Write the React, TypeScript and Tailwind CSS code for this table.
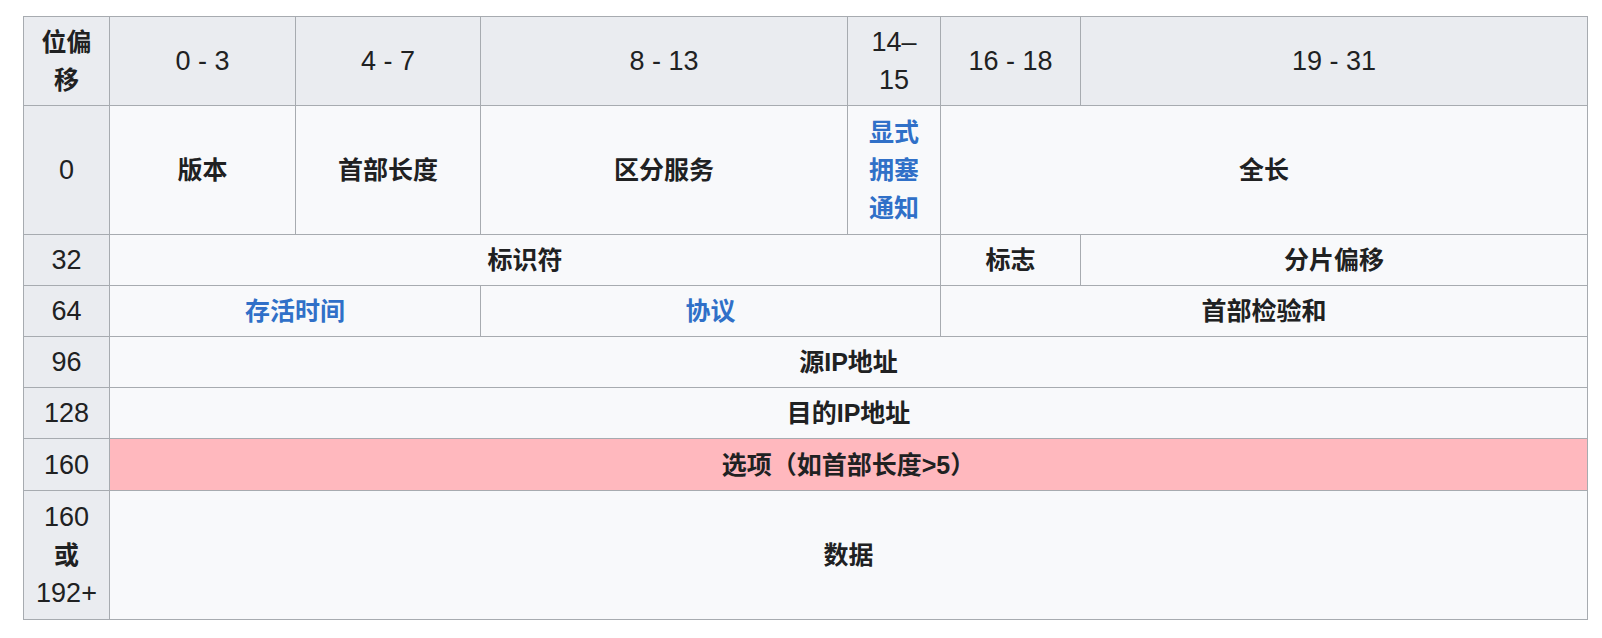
import React from 'react';

const num = "font-['Liberation_Sans','Noto_Sans_CJK_SC',sans-serif]";
const cjk = "font-['Liberation_Sans','Noto_Sans_CJK_SC',sans-serif]";

const th = `border border-[#a7abb0] bg-[#eaecf0] text-center align-middle text-[#202122] leading-[38px] p-0`;
const cell = `border border-[#a7abb0] bg-[#f8f9fb] text-center align-middle leading-[38px] p-0 text-[25px] font-bold ${cjk}`;
const td = `${cell} text-[#202122]`;
const link = `${cell} text-[#3070c8]`;
const rowHead = `${th} text-[27px] font-normal ${num}`;

const App: React.FC = () => {
  return (
    <div className="min-h-screen bg-white pl-[23px] pt-[16px]">
      <table className="table-fixed border-collapse w-[1564px]">
        <colgroup>
          <col className="w-[86px]" />
          <col className="w-[186px]" />
          <col className="w-[185px]" />
          <col className="w-[367px]" />
          <col className="w-[93px]" />
          <col className="w-[140px]" />
          <col className="w-[507px]" />
        </colgroup>
        <thead>
          <tr className="h-[89px]">
            <th className={`${th} text-[25px] font-bold ${cjk}`}>位偏<br />移</th>
            <th className={rowHead}>0 - 3</th>
            <th className={rowHead}>4 - 7</th>
            <th className={rowHead}>8 - 13</th>
            <th className={rowHead}>14–<br />15</th>
            <th className={rowHead}>16 - 18</th>
            <th className={rowHead}>19 - 31</th>
          </tr>
        </thead>
        <tbody>
          <tr className="h-[129px]">
            <th className={rowHead}>0</th>
            <td className={td}>版本</td>
            <td className={td}>首部长度</td>
            <td className={td}>区分服务</td>
            <td className={link}>显式<br />拥塞<br />通知</td>
            <td className={td} colSpan={2}>全长</td>
          </tr>
          <tr className="h-[51px]">
            <th className={rowHead}>32</th>
            <td className={td} colSpan={4}>标识符</td>
            <td className={td}>标志</td>
            <td className={td}>分片偏移</td>
          </tr>
          <tr className="h-[51px]">
            <th className={rowHead}>64</th>
            <td className={link} colSpan={2}>存活时间</td>
            <td className={link} colSpan={2}>协议</td>
            <td className={td} colSpan={2}>首部检验和</td>
          </tr>
          <tr className="h-[51px]">
            <th className={rowHead}>96</th>
            <td className={td} colSpan={6}>源IP地址</td>
          </tr>
          <tr className="h-[51px]">
            <th className={rowHead}>128</th>
            <td className={td} colSpan={6}>目的IP地址</td>
          </tr>
          <tr className="h-[52px]">
            <th className={rowHead}>160</th>
            <td className={`border border-[#a7abb0] bg-[#ffb8be] text-center align-middle leading-[38px] p-0 text-[25px] font-bold text-[#202122] ${cjk}`} colSpan={6}>
              选项（如首部长度&gt;5）
            </td>
          </tr>
          <tr className="h-[129px]">
            <th className={rowHead}>
              160<br /><span className="text-[25px] font-bold">或</span><br />192+
            </th>
            <td className={td} colSpan={6}>数据</td>
          </tr>
        </tbody>
      </table>
    </div>
  );
};

export default App;
